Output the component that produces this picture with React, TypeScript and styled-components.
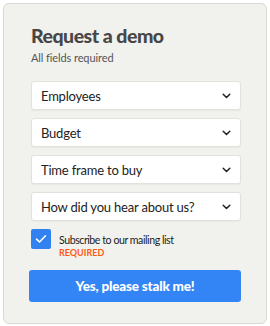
import React from "react";
import styled, { createGlobalStyle } from "styled-components";

const Global = createGlobalStyle`
  html, body { margin: 0; padding: 0; background: #ffffff; }
  body { font-family: Lato, "Liberation Sans", sans-serif; }
  * { box-sizing: border-box; }
`;

const Page = styled.div`
  padding: 3px 3px 2px 3px;
  width: 270px;
`;

const Card = styled.form`
  background: #f1f1ed;
  border: 1px solid #d9d9d3;
  border-radius: 6px;
  padding: 20px 24px 21px 27px;
  display: flex;
  flex-direction: column;
  height: 321px;
`;

const Title = styled.h1`
  margin: 0;
  font-family: Lato, sans-serif;
  font-weight: 900;
  font-size: 19.5px;
  line-height: 24px;
  color: #474747;
  letter-spacing: -0.5px;
`;

const Subtitle = styled.p`
  margin: 3px 0 0 0;
  font-size: 11px;
  line-height: 14px;
  color: #555;
  letter-spacing: -0.1px;
`;

const Fields = styled.div`
  margin-top: 16px;
  display: flex;
  flex-direction: column;
  gap: 8px;
`;

const Select = styled.div`
  height: 29px;
  width: 210px;
  background: #ffffff;
  border: 1px solid #e2e2dd;
  border-radius: 3px;
  box-shadow: 0 1px 1px rgba(0, 0, 0, 0.04);
  display: flex;
  align-items: center;
  justify-content: space-between;
  padding: 0 9px 0 9px;
  font-size: 13px;
  letter-spacing: -0.2px;
  color: #222;
`;

const CheckRow = styled.div`
  margin-top: 8px;
  display: flex;
  gap: 8px;
`;

const Box = styled.div`
  width: 20px;
  height: 20px;
  border-radius: 2px;
  background: #3281f0;
  display: flex;
  align-items: center;
  justify-content: center;
  flex-shrink: 0;
`;

const Labels = styled.div`
  display: flex;
  flex-direction: column;
  padding-top: 4px;
`;

const Label = styled.span`
  font-size: 10.6px;
  line-height: 14px;
  letter-spacing: -0.45px;
  color: #222;
`;

const Required = styled.span`
  font-size: 9px;
  line-height: 12px;
  font-weight: 700;
  color: #ff5a14;
`;

const Button = styled.button`
  margin-top: 11px;
  margin-left: -2px;
  width: 212px;
  height: 33px;
  border: none;
  border-radius: 3px;
  background: #3384f4;
  color: #fff;
  font-family: Lato, sans-serif;
  font-weight: 900;
  font-size: 13.5px;
  letter-spacing: -0.2px;
`;

const Chevron = () => (
  <svg width="9" height="6" viewBox="0 0 9 6">
    <path d="M1.2 1.2 L4.5 4.5 L7.8 1.2" fill="none" stroke="#222" strokeWidth="1.5" strokeLinecap="round" strokeLinejoin="round" />
  </svg>
);

const fields = ["Employees", "Budget", "Time frame to buy", "How did you hear about us?"];

export default function App() {
  return (
    <Page>
      <Global />
      <Card onSubmit={(e) => e.preventDefault()}>
        <Title>Request a demo</Title>
        <Subtitle>All fields required</Subtitle>
        <Fields>
          {fields.map((f) => (
            <Select key={f}>
              <span>{f}</span>
              <Chevron />
            </Select>
          ))}
        </Fields>
        <CheckRow>
          <Box>
            <svg width="12" height="10" viewBox="0 0 12 10">
              <path d="M1.5 5.2 L4.5 8 L10.5 1.8" fill="none" stroke="#fff" strokeWidth="1.6" strokeLinecap="round" strokeLinejoin="round" />
            </svg>
          </Box>
          <Labels>
            <Label>Subscribe to our mailing list</Label>
            <Required>REQUIRED</Required>
          </Labels>
        </CheckRow>
        <Button type="submit">Yes, please stalk me!</Button>
      </Card>
    </Page>
  );
}
